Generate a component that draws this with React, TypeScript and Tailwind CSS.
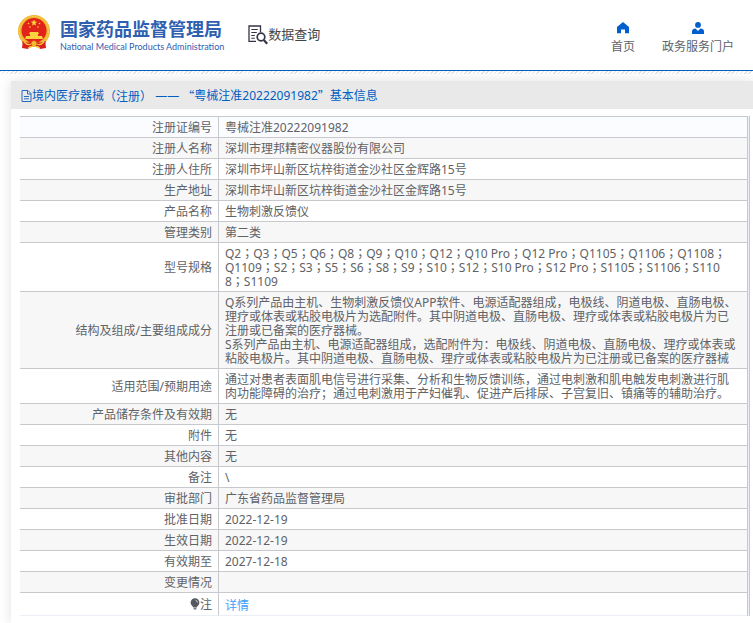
import React from 'react';

interface Row {
  label: string;
  value: string;
  models?: boolean;
}

const rows: Row[] = [
  { label: '注册证编号', value: '粤械注准20222091982' },
  { label: '注册人名称', value: '深圳市理邦精密仪器股份有限公司' },
  { label: '注册人住所', value: '深圳市坪山新区坑梓街道金沙社区金辉路15号' },
  { label: '生产地址', value: '深圳市坪山新区坑梓街道金沙社区金辉路15号' },
  { label: '产品名称', value: '生物刺激反馈仪' },
  { label: '管理类别', value: '第二类' },
  {
    label: '型号规格',
    value:
      'Q2；Q3；Q5；Q6；Q8；Q9；Q10；Q12；Q10 Pro；Q12 Pro；Q1105；Q1106；Q1108；\nQ1109；S2；S3；S5；S6；S8；S9；S10；S12；S10 Pro；S12 Pro；S1105；S1106；S110\n8；S1109',
    models: true,
  },
  {
    label: '结构及组成/主要组成成分',
    value:
      'Q系列产品由主机、生物刺激反馈仪APP软件、电源适配器组成，电极线、阴道电极、直肠电极、理疗或体表或粘胶电极片为选配附件。其中阴道电极、直肠电极、理疗或体表或粘胶电极片为已注册或已备案的医疗器械。\nS系列产品由主机、电源适配器组成，选配附件为：电极线、阴道电极、直肠电极、理疗或体表或粘胶电极片。其中阴道电极、直肠电极、理疗或体表或粘胶电极片为已注册或已备案的医疗器械',
  },
  {
    label: '适用范围/预期用途',
    value:
      '通过对患者表面肌电信号进行采集、分析和生物反馈训练，通过电刺激和肌电触发电刺激进行肌肉功能障碍的治疗；通过电刺激用于产妇催乳、促进产后排尿、子宫复旧、镇痛等的辅助治疗。',
  },
  { label: '产品储存条件及有效期', value: '无' },
  { label: '附件', value: '无' },
  { label: '其他内容', value: '无' },
  { label: '备注', value: '\\' },
  { label: '审批部门', value: '广东省药品监督管理局' },
  { label: '批准日期', value: '2022-12-19' },
  { label: '生效日期', value: '2022-12-19' },
  { label: '有效期至', value: '2027-12-18' },
  { label: '变更情况', value: '' },
];

const Emblem = () => (
  <svg viewBox="0 0 32 35" className="h-[35px] w-8 shrink-0" aria-hidden="true">
    <path d="M5 25 L4 33 L10 34 L12 31 L20 31 L22 34 L28 33 L27 25 Z" fill="#d8201c" />
    <circle cx="16" cy="16" r="16" fill="#f0b630" />
    <circle cx="16" cy="16" r="14.5" fill="none" stroke="#f8d363" strokeWidth="1" strokeDasharray="2 1" />
    <circle cx="16" cy="15.5" r="12.5" fill="#e2231a" />
    <path d="M16 4.5 l.9 2.1 2.3.2-1.8 1.5.6 2.3-2-1.2-2 1.2.6-2.3-1.8-1.5 2.3-.2z" fill="#fbd33c" />
    <g fill="#fbd33c">
      <circle cx="10.5" cy="8.5" r=".8" />
      <circle cx="21.5" cy="8.5" r=".8" />
      <circle cx="12" cy="12" r=".8" />
      <circle cx="20" cy="12" r=".8" />
      <path d="M12 17h8l1 2H11zM12 19h8v2h-8zM8 21h16l1 3H7z" />
    </g>
    <path d="M4 26 Q10 29 16 26 Q22 29 28 26 L27 29 Q22 33 16 30 Q10 33 5 29 Z" fill="#d8201c" />
    <circle cx="16" cy="28.5" r="3" fill="#f3b92f" stroke="#d8201c" strokeWidth=".6" />
    <path d="M6 27 Q10 31 13 29 M26 27 Q22 31 19 29 M10 33 L16 31 L22 33" fill="none" stroke="#f6c63b" strokeWidth="1.2" />
  </svg>
);

const SearchDocIcon = () => (
  <svg viewBox="0 0 20 20" className="h-5 w-5 shrink-0" fill="none" stroke="#343447" aria-hidden="true">
    <path d="M8 16.3H1V1h11.5v6" strokeWidth="1.3" />
    <path d="M3.3 4.5h6.5M3.3 7.5h5.5M3.3 10.5h3.5M3.3 13.3h3.5" strokeWidth="1.1" />
    <circle cx="13" cy="12" r="3.8" strokeWidth="1.7" />
    <path d="M15.8 15l3.4 3.7" strokeWidth="2.2" />
  </svg>
);

const HomeIcon = () => (
  <svg viewBox="0 0 12 12" className="h-3 w-3" fill="#005fcc" aria-hidden="true">
    <path d="M6 0 0 5v6.2h4V7.5h4v3.7h4V5z" />
  </svg>
);

const UserIcon = () => (
  <svg viewBox="0 0 12 12" className="h-3 w-3" fill="#005fcc" aria-hidden="true">
    <circle cx="6" cy="2.9" r="2.9" />
    <path d="M0 12V9.2Q.3 7 3.5 6.6L6 9l2.5-2.4Q11.7 7 12 9.2V12z" />
  </svg>
);

const DocIcon = () => (
  <svg viewBox="0 0 11 12" className="h-3 w-[11px] shrink-0" fill="none" stroke="#2668bd" aria-hidden="true">
    <path d="M1 .5h6l3 3v8H1z M6.5.5v3.5H10 M3 6.5h5M3 8.8h5" />
  </svg>
);

const BulbIcon = () => (
  <svg viewBox="0 0 10 12" className="inline-block h-3 w-[10px] align-middle" fill="#55595f" aria-hidden="true">
    <path d="M5 .3a4.4 4.4 0 0 0-4.4 4.4C.6 7 3 8 3.3 9.5h3.4C7 8 9.4 7 9.4 4.7A4.4 4.4 0 0 0 5 .3z" />
    <path d="M3.6 10.2h2.8v1.2H3.6z" />
    <path d="M5.5 2.2Q7.3 2.6 7.5 4.5" fill="none" stroke="#fff" strokeWidth=".7" />
  </svg>
);

const App: React.FC = () => {
  return (
    <div className="overflow-hidden bg-white font-['Noto_Sans','Noto_Sans_CJK_SC',sans-serif] text-xs text-[#606266]">
      <header className="flex h-[71px] items-start justify-between border-b border-[#005fc1] pr-[19px] pl-[18px]">
        <div className="flex pt-[15px]">
          <Emblem />
          <div className="ml-[10px] pt-1 text-[#2f60b0]">
            <h1 className="text-lg leading-5 font-bold whitespace-nowrap">国家药品监督管理局</h1>
            <p className="font-['Lato',sans-serif] text-[9px] leading-4 whitespace-nowrap">
              National Medical Products Administration
            </p>
          </div>
          <div className="ml-6 flex h-10 items-center text-[13px] whitespace-nowrap text-[#444]">
            <SearchDocIcon />
            <span>数据查询</span>
          </div>
        </div>
        <nav className="flex gap-[27px] pt-[22px]">
          <a href="#home" className="flex flex-col items-center gap-[5px]">
            <HomeIcon />
            <span className="leading-4">首页</span>
          </a>
          <a href="#portal" className="flex flex-col items-center gap-[5px]">
            <UserIcon />
            <span className="leading-4">政务服务门户</span>
          </a>
        </nav>
      </header>
      {/* Hatched strip under the header rule */}
      <div className="h-[3px] bg-[repeating-linear-gradient(135deg,#e6e2e6_0px,#e6e2e6_1px,#ffffff_1px,#ffffff_3px)]" />

      <main className="mt-[7px] ml-[11px] bg-white shadow-[0_0_12px_rgba(0,0,0,0.12)]">
        <h2 className="flex h-7 items-center bg-[#e9e9e9] pt-px pl-[10px] whitespace-pre text-[#005fc1]">
          <DocIcon />
          <span>境内医疗器械</span>
          <span className="font-['Noto_Sans_CJK_TC',sans-serif]">（注册）</span>
          <span> —— </span>
          <span className="font-['Noto_Sans_CJK_SC',sans-serif]">“</span>
          <span>粤械注准20222091982</span>
          <span className="font-['Noto_Sans_CJK_SC',sans-serif]">”</span>
          <span>基本信息</span>
        </h2>

        <div className="pt-[7px] pr-[3px] pb-2 pl-[9px]">
          <div className="border-r border-[#c8c9cc] bg-[#ebeef5] pr-px">
            <table className="w-full table-fixed border-separate border-spacing-0 border-t border-r border-[#c8c9cc] bg-white leading-[14px]">
              <colgroup>
                <col className="w-[199px]" />
                <col />
              </colgroup>
              <tbody>
                {rows.map((row) => (
                  <tr key={row.label} className="even:bg-[#f7f7f7] first:bg-[#fafcff]">
                    <th scope="row" className="border-r border-b border-[#c8c9cc] pt-1 pr-[6px] pb-[2px] pl-2 text-right font-normal">
                      {row.label}
                    </th>
                    <td
                      className={`h-[21px] border-b border-[#c8c9cc] pt-1 pr-[7px] pb-[2px] pl-[6px] break-all whitespace-pre-line ${
                        row.models ? "font-['Noto_Sans','Noto_Sans_CJK_TC',sans-serif]" : ''
                      }`}
                    >
                      {row.value}
                    </td>
                  </tr>
                ))}
                <tr>
                  <th scope="row" className="border-r border-b border-r-[#c8c9cc] border-b-[#ebeef5] pr-[6px] text-right font-normal">
                    <BulbIcon />
                    <span className="align-middle">注</span>
                  </th>
                  <td className="h-[23px] border-b border-[#ebeef5] pt-1 pl-[6px]">
                    <a href="#detail" className="text-[#409eff]">详情</a>
                  </td>
                </tr>
              </tbody>
            </table>
          </div>
        </div>
      </main>
    </div>
  );
};

export default App;
